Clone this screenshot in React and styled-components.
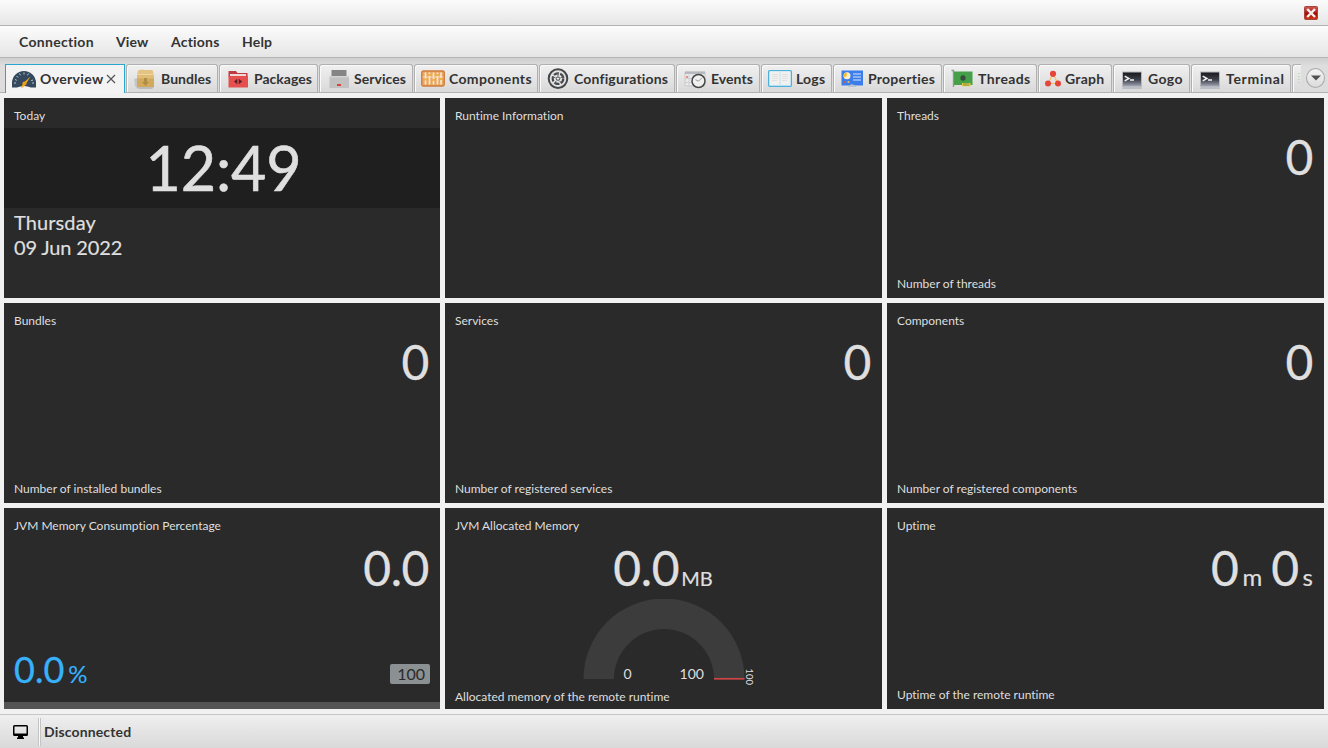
import React from "react";
import styled, { createGlobalStyle } from "styled-components";

const GlobalStyle = createGlobalStyle`
  * { box-sizing: border-box; }
  body {
    margin: 0;
    font-family: Lato, "Liberation Sans", sans-serif;
    font-variant-ligatures: none;
    background: #f1f1f1;
  }
`;

const Window = styled.div`
  width: 1328px;
  height: 748px;
  display: flex;
  flex-direction: column;
  overflow: hidden;
  background: #f1f1f1;
`;
const TitleBar = styled.header`
  height: 26px;
  flex: none;
  display: flex;
  justify-content: flex-end;
  padding: 6px 10px 0 0;
  background: linear-gradient(#fbfbfb, #e6e6e6);
  border-bottom: 1px solid #b3b3b3;
`;
const MenuBar = styled.nav`
  height: 32px;
  flex: none;
  display: flex;
  align-items: center;
  padding-left: 19px;
  background: linear-gradient(#fcfcfc, #e5e5e5);
  border-bottom: 1px solid #b4b4b4;
`;
const Label = styled.span`
  font-size: 14px;
  font-weight: 700;
  line-height: 18px;
  color: #333;
  white-space: nowrap;
  letter-spacing: ${(p) => p.$spacing || 0}px;
`;
const MenuItem = styled(Label)`
  width: ${(p) => p.$width}px;
`;
const TabStrip = styled.div`
  height: 35px;
  flex: none;
  display: flex;
  align-items: flex-end;
  gap: 1px;
  padding-left: 5px;
  background: linear-gradient(#cfcfcf, #dedede 8px, #dcdcdc);
  border-bottom: 1px solid #b2b2b2;
`;
const Tab = styled.div`
  width: ${(p) => p.$width}px;
  height: ${(p) => (p.$active ? 29 : 28)}px;
  margin-bottom: ${(p) => (p.$active ? -1 : 0)}px;
  padding: ${(p) => (p.$active ? "0 0 1px 6px" : "0 0 0 6px")};
  flex: none;
  display: flex;
  align-items: center;
  gap: 4px;
  overflow: hidden;
  border: ${(p) => (p.$active ? "1.5px solid #2ba6cf" : "1px solid #b0b0b0")};
  border-bottom: 0;
  border-radius: ${(p) => (p.$active ? "0" : "3px 3px 0 0")};
  background: ${(p) => (p.$active ? "#f3f3f3" : "linear-gradient(#f0f0f0, #d9d9d9)")};
  box-shadow: ${(p) => (p.$active ? "none" : "inset 1px 1px 0 #fafafa")};
  svg { flex: none; }
`;
const CloseMark = styled.svg`
  margin-left: -2px;
`;
const CutTab = styled(Tab)`
  padding-left: 5px;
  border-right: 0;
  border-radius: 3px 0 0 0;
`;
const MoreButton = styled.button`
  width: 19px;
  height: 20px;
  margin: 0 0 4px 4px;
  padding: 0;
  display: flex;
  align-items: center;
  justify-content: center;
  border: 1px solid #a9a9a9;
  border-radius: 50%;
  background: linear-gradient(#f3f3f3, #dcdcdc);
`;
const Board = styled.main`
  flex: 1;
  display: grid;
  grid-template-columns: 436px 437px 437px;
  grid-template-rows: 200px 200px 201px;
  gap: 5px;
  padding: 5px 4px;
`;
const Tile = styled.section`
  display: flex;
  flex-direction: column;
  padding: 10px 10px ${(p) => p.$bottom ?? 6}px;
  background: #2a2a2a;
  color: #dfdfdf;
  min-height: 0;
`;
const Caption = styled.div`
  font-size: 12px;
  line-height: 16px;
  white-space: nowrap;
`;
const Footer = styled(Caption)`
  margin-top: auto;
`;
const Reading = styled.div`
  height: 60px;
  margin-top: ${(p) => (p.$low ? 4 : 3)}px;
  padding-right: 1px;
  display: flex;
  flex: none;
  align-items: baseline;
  justify-content: ${(p) => (p.$center ? "center" : "flex-end")};
  font-size: 48px;
  line-height: 60px;
  letter-spacing: -0.4px;
  white-space: nowrap;
  -webkit-text-stroke: 0.3px #dfdfdf;
`;
const Unit = styled.span`
  font-size: ${(p) => p.$size || 20}px;
  letter-spacing: 0;
  -webkit-text-stroke-width: 0.2px;
  margin-left: ${(p) => p.$left}px;
  margin-right: ${(p) => p.$right || 0}px;
`;
const Clock = styled.div`
  height: 80px;
  margin: 4px -10px 0;
  padding-left: 3px;
  background: #1f1f1f;
  text-align: center;
  font-size: 61px;
  line-height: 80px;
  letter-spacing: -0.2px;
  -webkit-text-stroke: 0.6px #dfdfdf;
`;
const DateLines = styled.div`
  margin-top: 2px;
  font-size: 20px;
  line-height: 25px;
  white-space: nowrap;
`;
const DateLine = styled.div`
  letter-spacing: ${(p) => p.$spacing}px;
  -webkit-text-stroke: 0.2px #dfdfdf;
`;
const PercentRow = styled.div`
  margin-top: auto;
  height: 44px;
  display: flex;
  justify-content: space-between;
  align-items: flex-start;
`;
const Percent = styled.div`
  margin-top: -1px;
  color: #37b2fa;
  font-size: 36px;
  line-height: 44px;
  -webkit-text-stroke: 0.3px #37b2fa;
  span { font-size: 24px; margin-left: 4px; -webkit-text-stroke-width: 0.1px; }
`;
const MaxBadge = styled.div`
  width: 40px;
  height: 20px;
  margin-top: 16px;
  padding-right: 5px;
  border-radius: 2px;
  background: #8b9092;
  color: #2a2a2a;
  text-align: right;
  font-size: 16px;
  line-height: 20px;
`;
const Bar = styled.div`
  height: 7px;
  margin: 10px -10px 0;
  background: #545454;
`;
const GaugeBox = styled.div`
  display: flex;
  flex: none;
  justify-content: center;
  margin-top: 1px;
  svg { flex: none; display: block; }
`;
const StatusBar = styled.footer`
  height: 34px;
  flex: none;
  display: flex;
  align-items: center;
  padding-left: 12px;
  background: linear-gradient(#efefef, #d9d9d9);
  border-top: 1px solid #c6c6c6;
`;
const Divider = styled.i`
  width: 3px;
  height: 28px;
  margin: 0 3px 0 9px;
  border: 1px solid #c4c4c4;
  border-width: 0 1px;
  background: #fafafa;
`;

const Svg = ({ w = 24, children }) => (
  <svg width={w} height="24" viewBox={`0 0 ${w} 24`}>{children}</svg>
);

const icons = {
  overview: (
    <Svg>
      <path d="M0 20.5V16A12 12 0 0 1 24 16V20.5H19Q12 17.500 5 20.5Z" fill="#34495e" />
      <path d="M2 16h2M20 16h2M4.5 9l1.5 1.5M12 5.5v2M7.5 6.5l1 1.8M16.5 6.5l-1 1.8M3 12.5l1.8.8M21 13l-1.8.6" stroke="#bdc9d2" strokeWidth="1" />
      <path d="M18.5 9.5L13.6 17.4 10 21 9 20 12 15.6Z" fill="#f5ab1d" />
      <circle cx="12.4" cy="16.5" r="2" fill="#f39c12" />
    </Svg>
  ),
  bundles: (
    <Svg>
      <path d="M1 12l4-1v11l-3-3Z" fill="#aaa" opacity=".5" />
      <path d="M4 20h17l-2 2H6Z" fill="#999" opacity=".5" />
      <path d="M5 3.500L9 2.500 11 3H19.500L21 8H4Z" fill="#e4c384" />
      <path d="M4 7.5h17v12.500H4Z" fill="#d1aa5c" />
      <path d="M4 7.5h17v4H4Z" fill="#dfbd76" />
      <path d="M4 7.5h17" stroke="#efd59e" />
      <path d="M11 11h3v4h2l-3.500 3.800L9 15h2Z" fill="#b18c48" />
    </Svg>
  ),
  packages: (
    <Svg>
      <path d="M2.500 4h7.500l1.500 2h10v4h-19Z" fill="#bd3c43" />
      <path d="M4 7h16v3H4Z" fill="#efd9d6" />
      <path d="M2.500 9H22v11.500H2.500Z" fill="#e5504f" />
      <path d="M11.300 11.800v5.400L8 14.500ZM12.800 11.800v5.400l3.400-2.700Z" fill="#5b2028" />
    </Svg>
  ),
  services: (
    <Svg>
      <path d="M5.500 3h15v6h-15Z" fill="#858585" />
      <path d="M3.500 9.500H23V21H3.500Z" fill="#c1c1c1" />
      <path d="M3.500 10H23" stroke="#d3d3d3" />
      <path d="M11 17h4v2h-4Z" fill="#d94438" />
    </Svg>
  ),
  components: (
    <Svg>
      <rect x=".7" y="4" width="22.600" height="15" rx="1.500" fill="#e9a660" stroke="#cf7d3e" strokeWidth="1.300" />
      <path d="M4.500 5.500v12M8.500 5.500v12M12.500 5.500v12M16.500 5.500v12M20 5.500v12" stroke="#f9ead2" strokeWidth="1.600" />
      <path d="M2 10h20" stroke="#f6dfbd" strokeWidth="1" />
      <path d="M3.300 12.500h2.400M7.300 8h2.400M11.300 13h2.400M15.300 8h2.400M19 12h2.200" stroke="#f5ad3f" strokeWidth="2" />
    </Svg>
  ),
  configurations: (
    <Svg>
      <circle cx="12" cy="11.600" r="9.300" fill="#e2e2e2" stroke="#45484b" strokeWidth="2" />
      <circle cx="12" cy="11.600" r="5.300" fill="none" stroke="#45484b" strokeWidth="2.200" strokeDasharray="5.200 1.460" />
      <path d="M12 9V5.500M14.500 10.800l3.100-1M13.500 13.700l2 2.800M10.500 13.700l-2 2.800M9.500 10.800l-3.100-1" stroke="#65686b" strokeWidth="1" />
      <circle cx="12" cy="11.600" r="1.700" fill="#eee" stroke="#45484b" />
    </Svg>
  ),
  events: (
    <Svg>
      <path d="M2 5h20v14H2Z" fill="#e9e9e9" stroke="#c9c9c9" />
      <path d="M2 4.500h20V7H2Z" fill="#b5b9be" />
      <path d="M2 11.500h20M2 15.500h20M6 7.500V19M10 7.500V19M14 7.500V19M18 7.500V19" stroke="#c6cad0" strokeWidth=".8" />
      <path d="M3 9h2v2H3Z" fill="#ec8c7d" />
      <circle cx="15.500" cy="14" r="6.500" fill="#f0f0f0" stroke="#474747" strokeWidth="1.500" />
      <path d="M12.500 12.700l3 1.500 3.500-3.500" fill="none" stroke="#999" />
    </Svg>
  ),
  logs: (
    <Svg>
      <rect x=".6" y="3.600" width="22.800" height="15.800" rx="1" fill="#dff0f7" stroke="#4eb1dc" strokeWidth="1.200" />
      <path d="M2 4.500h20v13H2Z" fill="#f1f1ef" />
      <path d="M12 4.500v14" stroke="#c9e0ea" />
      <path d="M4 7.500h6M4 9.500h6M4 11.500h6M4 13.500h5M14 7.500h6M14 9.500h6M14 11.500h6M14 13.500h5" stroke="#dcdcdc" strokeWidth=".8" />
    </Svg>
  ),
  properties: (
    <Svg>
      <path d="M1.500 3.500H23V18.500H1.500Z" fill="#3b7deb" />
      <circle cx="7" cy="8.800" r="3.500" fill="#fff0c8" />
      <path d="M6.800 5.500a3.300 3.300 0 0 0-2.800 5L6.800 9Z" fill="#f4bd34" />
      <path d="M13 7h8M13 10h8M13 13h8" stroke="#d9e7fa" strokeWidth="1.200" />
      <circle cx="5" cy="15" r="1.100" fill="#e65c43" /><circle cx="8.500" cy="15" r="1.100" fill="#f0c05a" />
      <path d="M8 20a4.300 4.300 0 0 1 8 0Z" fill="#bbc3cc" />
    </Svg>
  ),
  threads: (
    <Svg>
      <path d="M1.500 3.500h2V20" fill="none" stroke="#929795" strokeWidth="1.400" />
      <path d="M4 4.500h18.500V18H4Z" fill="#46a04a" />
      <path d="M12 16h8.500v3.200H12Z" fill="#eec13e" />
      <path d="M14 16v3M16 16v3M18 16v3" stroke="#418744" strokeWidth=".7" />
      <path d="M13 8v6M10 11h6M10.900 8.900l4.200 4.200M15.100 8.900l-4.200 4.200" stroke="#284c2c" strokeWidth="1.200" />
      <circle cx="13" cy="11" r="2" fill="#434a45" />
    </Svg>
  ),
  graph: (
    <Svg w={16}>
      <path d="M8 7L3 16.500h10Z" fill="none" stroke="#f3c35c" strokeWidth="1.200" />
      <circle cx="8" cy="6.800" r="3.100" fill="#e6453c" />
      <circle cx="3" cy="16.400" r="3" fill="#e6453c" />
      <circle cx="13" cy="16.400" r="3" fill="#e6453c" />
    </Svg>
  ),
  terminal: (
    <Svg>
      <defs>
        <linearGradient id="screen" x2="0" y2="1">
          <stop stopColor="#15171b" /><stop offset=".55" stopColor="#3f434c" /><stop offset="1" stopColor="#a4a9ba" />
        </linearGradient>
      </defs>
      <path d="M3 19.500h18l1 2.500H2Z" fill="#b9bdc6" />
      <rect x="2.500" y="5" width="19" height="14.500" fill="url(#screen)" stroke="#b7b9bd" />
      <path d="M4.700 9.200l4.200 2.300-4.200 2.300M10 13h4" fill="none" stroke="#f1f1f1" strokeWidth="1.500" />
    </Svg>
  ),
};

const menus = [
  ["Connection", 97, 0.3], ["View", 55, 0.1], ["Actions", 71, 0.2], ["Help", 40, 0.2],
];
const tabs = [
  ["Bundles", 92, "bundles", 0.05], ["Packages", 99, "packages", 0], ["Services", 94, "services", 0.05],
  ["Components", 124, "components", 0.35], ["Configurations", 136, "configurations", 0.17],
  ["Events", 84, "events", 0.05], ["Logs", 71, "logs", 0.2], ["Properties", 109, "properties", 0.25],
  ["Threads", 94, "threads", 0.4], ["Graph", 74, "graph", 0.25], ["Gogo", 77, "terminal", 0.35],
  ["Terminal", 100, "terminal", 0.7],
];

function CountTile({ title, footer }) {
  return (
    <Tile>
      <Caption>{title}</Caption>
      <Reading>0</Reading>
      <Footer>{footer}</Footer>
    </Tile>
  );
}

function Gauge() {
  return (
    <GaugeBox>
      <svg width="190" height="90" viewBox="0 0 190 90" fontFamily="Lato, sans-serif" fill="#dfdfdf">
        <path d="M14.500 80A80.500 80.500 0 0 1 175.500 80H145A50 50 0 0 0 45 80Z" fill="#3c3c3c" />
        <path d="M145 79.800h30.500" stroke="#cf4545" strokeWidth="1.700" />
        <text x="58.500" y="80" textAnchor="middle" fontSize="14">0</text>
        <text x="122.800" y="80" textAnchor="middle" fontSize="14">100</text>
        <text transform="translate(177 69.500) rotate(90)" fontSize="9.500">100</text>
      </svg>
    </GaugeBox>
  );
}

export default function App() {
  return (
    <Window>
      <GlobalStyle />
      <TitleBar>
        <svg width="15" height="14" viewBox="0 0 15 14">
          <defs>
            <linearGradient id="close" x2="0" y2="1">
              <stop stopColor="#cf5b52" /><stop offset=".45" stopColor="#b52019" /><stop offset=".5" stopColor="#980b06" /><stop offset="1" stopColor="#d63a13" />
            </linearGradient>
          </defs>
          <rect x="1.500" y=".5" width="13" height="13" rx="1" fill="url(#close)" stroke="#a5453c" />
          <path d="M4.200 3l7.800 8M12 3l-7.800 8" stroke="#f4eeee" strokeWidth="2.500" />
        </svg>
      </TitleBar>
      <MenuBar>
        {menus.map(([name, width, spacing]) => (
          <MenuItem key={name} $width={width} $spacing={spacing}>{name}</MenuItem>
        ))}
      </MenuBar>
      <TabStrip>
        <Tab $active $width={120}>
          {icons.overview}
          <Label $spacing={0.35}>Overview</Label>
          <CloseMark width="10" height="10" viewBox="0 0 10 10">
            <path d="M1 1l8 8M9 1L1 9" stroke="#555" strokeWidth="1.200" />
          </CloseMark>
        </Tab>
        {tabs.map(([name, width, icon, spacing]) => (
          <Tab key={name} $width={width}>
            {icons[icon]}
            <Label $spacing={spacing}>{name}</Label>
          </Tab>
        ))}
        <CutTab $width={9}>
          <svg width="2" height="12" viewBox="0 0 2 12"><path d="M1 0v12" stroke="#9bc98d" strokeDasharray="1 2" /></svg>
        </CutTab>
        <MoreButton>
          <svg width="10" height="6" viewBox="0 0 10 6"><path d="M0 .5h10L5 5.500Z" fill="#505050" /></svg>
        </MoreButton>
      </TabStrip>
      <Board>
        <Tile>
          <Caption>Today</Caption>
          <Clock>12:49</Clock>
          <DateLines>
            <DateLine $spacing={0.1}>Thursday</DateLine>
            <DateLine $spacing={-0.15}>09 Jun 2022</DateLine>
          </DateLines>
        </Tile>
        <Tile><Caption>Runtime Information</Caption></Tile>
        <CountTile title="Threads" footer="Number of threads" />
        <CountTile title="Bundles" footer="Number of installed bundles" />
        <CountTile title="Services" footer="Number of registered services" />
        <CountTile title="Components" footer="Number of registered components" />
        <Tile $bottom={0}>
          <Caption>JVM Memory Consumption Percentage</Caption>
          <Reading $low>0.0</Reading>
          <PercentRow>
            <Percent>0.0<span>%</span></Percent>
            <MaxBadge>100</MaxBadge>
          </PercentRow>
          <Bar />
        </Tile>
        <Tile $bottom={4}>
          <Caption>JVM Allocated Memory</Caption>
          <Reading $low $center>0.0<Unit $left={2}>MB</Unit></Reading>
          <Gauge />
          <Footer>Allocated memory of the remote runtime</Footer>
        </Tile>
        <Tile>
          <Caption>Uptime</Caption>
          <Reading $low>0<Unit $size={24} $left={4} $right={9}>m</Unit>0<Unit $size={24} $left={4}>s</Unit></Reading>
          <Footer>Uptime of the remote runtime</Footer>
        </Tile>
      </Board>
      <StatusBar>
        <svg width="17" height="16" viewBox="0 0 17 16">
          <path d="M2.500 1h12a1.500 1.500 0 0 1 1.500 1.500v8a1.500 1.500 0 0 1-1.500 1.500H11v1.500h1V15H5v-1.500h1V12H2.500A1.500 1.500 0 0 1 1 10.500v-8A1.500 1.500 0 0 1 2.500 1ZM2.500 2.500v7h12v-7Z" fill="#000" fillRule="evenodd" />
        </svg>
        <Divider />
        <Label $spacing={0.15}>Disconnected</Label>
      </StatusBar>
    </Window>
  );
}
